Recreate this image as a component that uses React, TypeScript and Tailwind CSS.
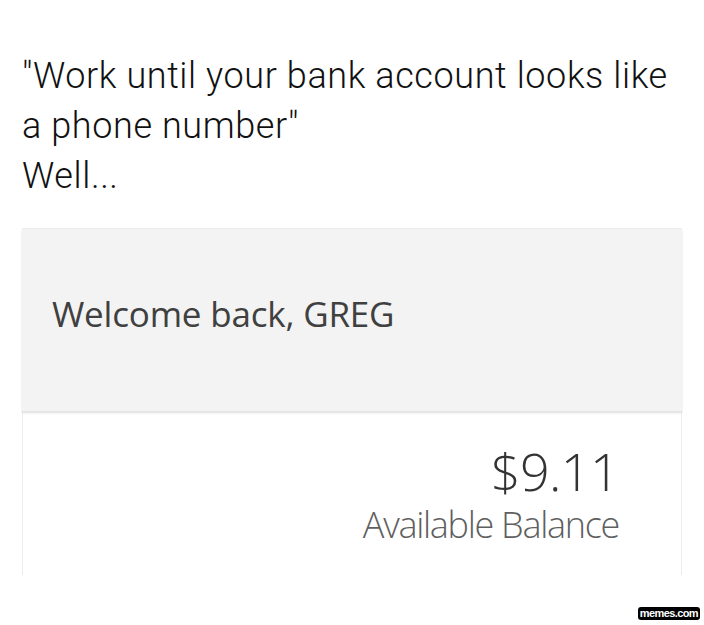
import React from 'react';

export default function App() {
  return (
    <div className="w-[704px] h-[625px] bg-white relative overflow-hidden">
      <div className="pl-[22px] pt-[51px] text-[36px] leading-[50px] font-light text-[#111] tracking-[0.6px]" style={{ fontFamily: 'Roboto, "Liberation Sans", sans-serif' }}>
        <p>"Work until your bank account looks like</p>
        <p>a phone number"</p>
        <p>Well...</p>
      </div>

      <div className="mt-[27px] ml-[22px] w-[660px]" style={{ fontFamily: '"Open Sans", "DejaVu Sans", sans-serif' }}>
        {/* greeting header */}
        <div className="h-[183px] bg-[#f3f3f3] border-t border-[#ececec] pl-[30px] pt-[61px] shadow-[0_2px_2px_rgba(0,0,0,0.12)] relative z-10">
          <span className="block text-[35px] leading-[48px] text-[#404040] tracking-[-0.2px]">Welcome back, GREG</span>
        </div>

        {/* balance */}
        <div className="h-[164px] bg-white border-x border-[#ededed] flex flex-col items-end pr-[62px] pt-[30px]">
          <span className="text-[52px] leading-[60px] text-[#333] font-light tracking-[-0.6px]">$9.11</span>
          <span className="mt-[2px] text-[36px] leading-[44px] text-[#5f5f5f] font-light tracking-[-1.3px]">Available Balance</span>
        </div>
      </div>

      {/* watermark */}
      <div className="absolute right-[4px] bottom-[5px] px-[2px] bg-black text-white text-[11px] leading-[13px] font-bold rounded-[3px] tracking-[-0.6px]" style={{ fontFamily: '"Liberation Sans", sans-serif' }}>
        memes.com
      </div>
    </div>
  );
}
